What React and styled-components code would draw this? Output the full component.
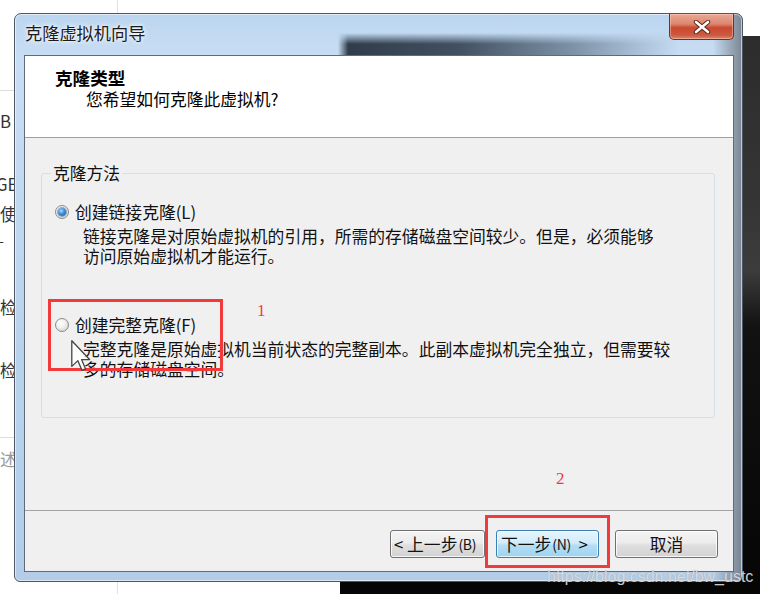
import React from 'react';
import styled, { createGlobalStyle } from 'styled-components';

const CJK = `"Noto Sans CJK SC", "Noto Sans", sans-serif`;

const Global = createGlobalStyle`
  html, body { margin: 0; padding: 0; background: #fff; }
  body { width: 760px; height: 594px; overflow: hidden; font-family: ${CJK}; }
`;

const Desktop = styled.div`
  position: relative;
  width: 760px;
  height: 594px;
  overflow: hidden;
  background: #fff;
`;

const BackApp = styled.div`
  position: absolute;
  inset: 0;
  background: #fff;
`;

const Sidebar = styled.div`
  width: 118px;
  height: 100%;
  box-sizing: border-box;
  border-right: 1px solid #e2e2e2;
  display: flex;
  flex-direction: column;
  font-family: ${CJK};
  font-size: 16.8px;
  line-height: 20px;
`;

const SideRule = styled.div`
  flex: none;
  margin-top: ${p => p.$mt}px;
  height: 1px;
  background: #dcdcdc;
`;

const SideText = styled.div`
  flex: none;
  margin-top: ${p => p.$mt}px;
  margin-left: ${p => p.$ml || 0}px;
  height: 20px;
  white-space: nowrap;
  color: ${p => (p.$faded ? '#9a9a9a' : '#333')};
`;

const DarkWindow = styled.div`
  position: absolute;
  left: 340px;
  top: 36px;
  right: 0;
  bottom: 0;
  background: linear-gradient(to bottom, #2c2c2c 0%, #353535 30%, #3c3c3c 42%, #121212 52%, #050505 100%);
`;

const Dialog = styled.div`
  position: absolute;
  left: 14px;
  top: 13px;
  width: 729px;
  height: 569px;
  box-sizing: border-box;
  border: 1px solid #4d5866;
  border-radius: 7px 7px 6px 6px;
  padding: 0 8px 9px 9px;
  display: flex;
  flex-direction: column;
  background:
    linear-gradient(to right, rgba(120,130,140,0) 96%, rgba(110,118,128,0.85) 100%),
    linear-gradient(to bottom, #bcd5ef 0%, #c8def4 8%, #b9d2ec 60%, #b3cde9 100%);
  box-shadow: inset 0 0 0 1px rgba(255,255,255,0.55);
`;

const TitleBar = styled.div`
  position: relative;
  height: 41px;
  flex: none;
  display: flex;
  align-items: flex-start;
`;

const TitleSmear = styled.div`
  position: absolute;
  left: 314px;
  top: 19px;
  width: 340px;
  height: 22px;
  background: linear-gradient(to right, rgba(40,52,66,0) 0%, rgba(40,52,66,0.95) 3%, rgba(50,64,80,0.9) 35%, rgba(80,100,120,0.6) 70%, rgba(120,140,160,0) 100%);
  -webkit-mask-image: linear-gradient(to bottom, transparent 0%, #000 50%);
  mask-image: linear-gradient(to bottom, transparent 0%, #000 50%);
  pointer-events: none;
`;

const TitleText = styled.div`
  position: relative;
  margin: 9px 0 0 1px;
  font-family: ${CJK};
  font-size: 17.2px;
  line-height: 20px;
  color: #1b1b1b;
  text-shadow: 0 0 6px #fff, 0 0 3px #fff;
`;

const CloseButton = styled.div`
  position: relative;
  margin-left: auto;
  width: 65px;
  height: 26px;
  box-sizing: border-box;
  border: 1px solid #6a3328;
  border-top: none;
  border-radius: 0 0 5px 5px;
  background: linear-gradient(to bottom, #e9a995 0%, #dc8670 40%, #c9492f 55%, #cc5a40 85%, #dc8a72 100%);
  box-shadow: inset 0 0 0 1px rgba(255,210,195,0.45);
  display: flex;
  align-items: center;
  justify-content: center;
`;

const Client = styled.div`
  flex: 1;
  display: flex;
  flex-direction: column;
  border: 1px solid #5f6b78;
  background: #f0f0f0;
  min-height: 0;
`;

const Header = styled.div`
  flex: none;
  height: 82px;
  box-sizing: border-box;
  background: #fff;
  border-bottom: 1px solid #a0a0a0;
  padding: 12px 0 0 30px;
  font-family: ${CJK};
  color: #000;
`;

const HeaderTitle = styled.div`
  font-size: 17.6px;
  font-weight: 700;
  line-height: 20px;
`;

const HeaderSub = styled.div`
  margin: 1px 0 0 31px;
  font-size: 16.8px;
  line-height: 20px;
`;

const Body = styled.div`
  flex: 1;
  padding: 25px 18px 0 16px;
  font-family: ${CJK};
  font-size: 16.8px;
  line-height: 20px;
  color: #111;
`;

const GroupBox = styled.fieldset`
  margin: 0;
  padding: 19px 0 38px 13px;
  border: 1px solid #d5dfe5;
  border-radius: 3px;
  min-width: 0;
`;

const Legend = styled.legend`
  margin-left: -4px;
  padding: 0 2px;
  line-height: 20px;
  color: #111;
`;

const Option = styled.div`
  margin-top: ${p => p.$mt || 0}px;
`;

const OptionRow = styled.div`
  display: flex;
  align-items: center;
  height: 20px;
`;

const Radio = styled.span`
  flex: none;
  width: 14px;
  height: 14px;
  box-sizing: border-box;
  border-radius: 50%;
  border: 1px solid #8a8a8a;
  margin-right: 6px;
  display: flex;
  align-items: center;
  justify-content: center;
  background: radial-gradient(circle at 40% 35%, #ffffff 0%, #f0f0f0 40%, #c9c9c9 100%);
  &::after {
    content: '';
    display: ${p => (p.$checked ? 'block' : 'none')};
    width: 8px;
    height: 8px;
    border-radius: 50%;
    background: radial-gradient(circle at 40% 35%, #a8dcff 0%, #3d8fd8 45%, #0f4f96 100%);
    box-shadow: 0 0 0 1px rgba(30,80,140,0.45);
  }
`;

const Desc = styled.div`
  margin-top: ${p => (p.$first ? 4 : 0)}px;
  padding-left: 28px;
  white-space: nowrap;
`;

const Footer = styled.div`
  flex: none;
  height: 61px;
  box-sizing: border-box;
  border-top: 1px solid #a3a3a3;
  display: flex;
  justify-content: flex-end;
  align-items: flex-start;
  padding: 19px 15px 0 0;
`;

const Button = styled.div`
  flex: none;
  width: ${p => p.$w}px;
  height: 28px;
  margin-left: ${p => p.$gap || 0}px;
  box-sizing: border-box;
  border: 1px solid ${p => (p.$primary ? '#3c7fb1' : '#707070')};
  border-radius: 3px;
  background: ${p =>
    p.$primary
      ? 'linear-gradient(to bottom, #e6f5fd 0%, #d2ecfa 45%, #b4ddf4 55%, #9fd3f0 100%)'
      : 'linear-gradient(to bottom, #f4f4f4 0%, #ececec 45%, #dfdfdf 55%, #d2d2d2 100%)'};
  box-shadow: inset 0 0 0 1px ${p => (p.$primary ? 'rgba(255,255,255,0.7)' : 'rgba(255,255,255,0.8)')};
  display: flex;
  align-items: center;
  justify-content: ${p => (p.$center ? 'center' : 'flex-start')};
  padding-left: ${p => (p.$center ? 0 : p.$pl || 0)}px;
  overflow: hidden;
  white-space: nowrap;
  font-family: ${CJK};
  font-size: 16.8px;
  line-height: 20px;
  color: #111;
`;

const Key = styled.span`
  font-size: 14px;
  letter-spacing: -0.3px;
  margin-left: 1px;
`;

const RedBox = styled.div`
  position: absolute;
  left: ${p => p.$x}px;
  top: ${p => p.$y}px;
  width: ${p => p.$w}px;
  height: ${p => p.$h}px;
  box-sizing: border-box;
  border: 3px solid #f2393b;
  pointer-events: none;
`;

const RedNumber = styled.div`
  position: absolute;
  left: ${p => p.$x}px;
  top: ${p => p.$y}px;
  font-family: "Liberation Serif", serif;
  font-size: 17px;
  line-height: 18px;
  color: #f23a3a;
`;

const Cursor = styled.svg`
  position: absolute;
  left: 71px;
  top: 340px;
`;

const Watermark = styled.div`
  position: absolute;
  left: 547px;
  top: 568px;
  font-family: "Liberation Sans", Arial, sans-serif;
  font-size: 16px;
  line-height: 18px;
  color: rgba(225, 225, 225, 0.9);
  text-shadow: 0 0 1px rgba(80, 80, 80, 0.35);
  white-space: nowrap;
`;

export default function App() {
  return (
    <Desktop>
      <Global />
      <BackApp>
        <Sidebar>
          <SideRule $mt={90} />
          <SideText $mt={20}>B 内存</SideText>
          <SideText $mt={43} $ml={-4}>GB 硬盘</SideText>
          <SideText $mt={10}>使用</SideText>
          <SideText $mt={6} $ml={-5}>–</SideText>
          <SideText $mt={47}>检查</SideText>
          <SideText $mt={43}>检查</SideText>
          <SideRule $mt={57} />
          <SideText $mt={11} $faded>述</SideText>
        </Sidebar>
      </BackApp>
      <DarkWindow />

      <Dialog>
        <TitleBar>
          <TitleSmear />
          <TitleText>克隆虚拟机向导</TitleText>
          <CloseButton>
            <svg width="18" height="14" viewBox="0 0 18 14">
              <path d="M3 2 L15 12 M15 2 L3 12" stroke="#5a2418" strokeWidth="4.4" strokeLinecap="round" />
              <path d="M3 2 L15 12 M15 2 L3 12" stroke="#ffffff" strokeWidth="2.6" strokeLinecap="round" />
            </svg>
          </CloseButton>
        </TitleBar>
        <Client>
          <Header>
            <HeaderTitle>克隆类型</HeaderTitle>
            <HeaderSub>您希望如何克隆此虚拟机?</HeaderSub>
          </Header>
          <Body>
            <GroupBox>
              <Legend>克隆方法</Legend>
              <Option>
                <OptionRow>
                  <Radio $checked />
                  <span>创建链接克隆(L)</span>
                </OptionRow>
                <Desc $first>链接克隆是对原始虚拟机的引用，所需的存储磁盘空间较少。但是，必须能够</Desc>
                <Desc>访问原始虚拟机才能运行。</Desc>
              </Option>
              <Option $mt={49}>
                <OptionRow>
                  <Radio />
                  <span>创建完整克隆(F)</span>
                </OptionRow>
                <Desc $first>完整克隆是原始虚拟机当前状态的完整副本。此副本虚拟机完全独立，但需要较</Desc>
                <Desc>多的存储磁盘空间。</Desc>
              </Option>
            </GroupBox>
          </Body>
          <Footer>
            <Button $w={95} $pl={3}>&lt;&nbsp;上一步<Key>(B)</Key></Button>
            <Button $w={103} $gap={11} $pl={4} $primary>下一步<Key>(N)</Key>&nbsp;&nbsp;&gt;</Button>
            <Button $w={103} $gap={16} $center>取消</Button>
          </Footer>
        </Client>
      </Dialog>

      <RedBox $x={48} $y={299} $w={175} $h={72} />
      <RedNumber $x={257} $y={302}>1</RedNumber>
      <RedBox $x={485} $y={515} $w={125} $h={53} />
      <RedNumber $x={556} $y={470}>2</RedNumber>

      <Cursor width="20" height="32" viewBox="0 0 12.5 20">
        <path d="M0.5 0.5 L0.5 16.5 L4.3 12.9 L6.9 19 L9.1 18.1 L6.6 12.2 L11.6 12.2 Z" fill="#fff" fillOpacity="0.85" stroke="#444" strokeWidth="0.8" strokeLinejoin="round" />
      </Cursor>

      <Watermark>https://blog.csdn.net/bw_ustc</Watermark>
    </Desktop>
  );
}
